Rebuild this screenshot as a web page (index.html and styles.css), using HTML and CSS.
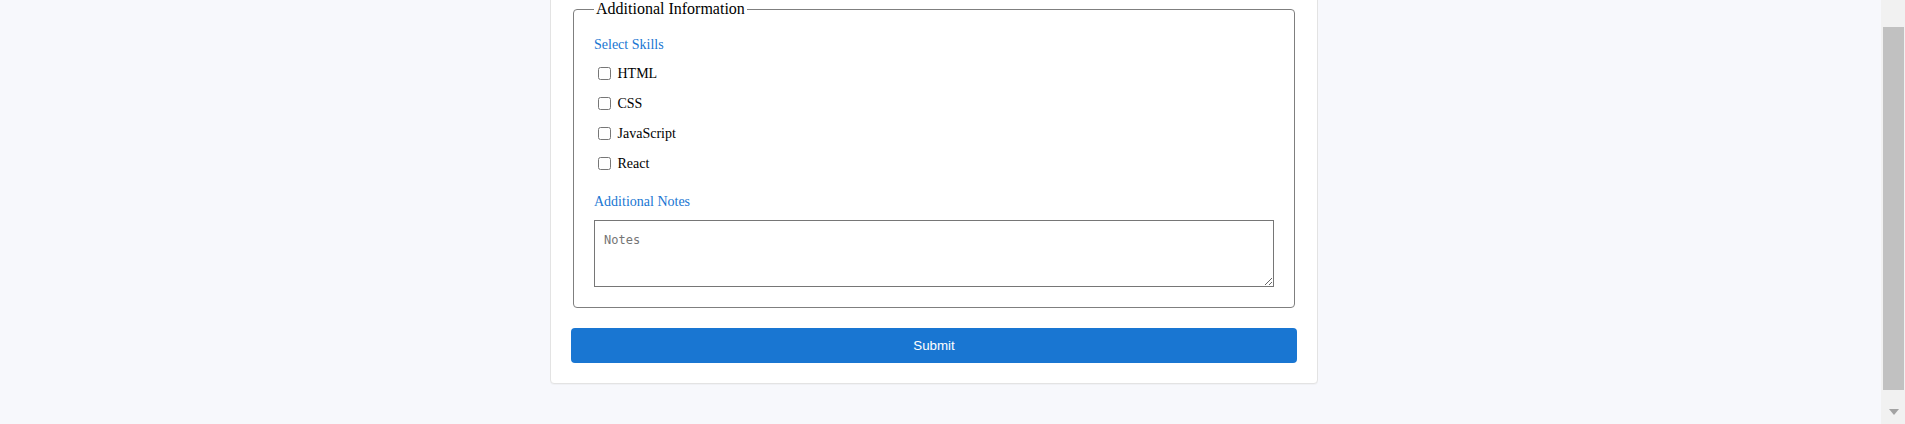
FILE: index.html
```html
<!DOCTYPE html>
<html lang="en">
<head>
<meta charset="utf-8">
<title>Form</title>
<link rel="stylesheet" href="styles.css">
</head>
<body>
<div class="viewport">
  <main class="page">
    <form class="card">
      <fieldset class="section">
        <legend class="section-title">Additional Information</legend>
        <span class="field-label">Select Skills</span>
        <div class="checkbox-list">
          <label class="checkbox-row"><input type="checkbox" class="checkbox"> HTML</label>
          <label class="checkbox-row"><input type="checkbox" class="checkbox"> CSS</label>
          <label class="checkbox-row"><input type="checkbox" class="checkbox"> JavaScript</label>
          <label class="checkbox-row"><input type="checkbox" class="checkbox"> React</label>
        </div>
        <label class="field-label notes-label" for="notes">Additional Notes</label>
        <textarea id="notes" class="notes" placeholder="Notes"></textarea>
      </fieldset>
      <button type="submit" class="submit">Submit</button>
    </form>
  </main>
</div>
<div class="scrollbar" aria-hidden="true">
  <div class="scrollbar-thumb"></div>
  <div class="scrollbar-button">
    <svg width="10" height="6" viewBox="0 0 10 6"><path d="M0 0h10L5 6z" fill="#a3a3a3"/></svg>
  </div>
</div>
</body>
</html>
```

FILE: styles.css
```css
html {
  background: #f7f8fc;
}

body {
  margin: 0;
  height: 100vh;
  display: flex;
  overflow: hidden;
  font-family: "Liberation Serif", "Times New Roman", serif;
  color: #000;
}

.viewport {
  flex: 1;
  min-width: 0;
  height: 100vh;
  overflow: hidden;
  display: flex;
  flex-direction: column;
  justify-content: flex-end;
}

.scrollbar {
  width: 24px;
  flex: none;
  background: #f1f1f1;
  display: flex;
  flex-direction: column;
  padding-top: 27px;
  box-sizing: border-box;
}

.scrollbar-thumb {
  flex: 1;
  margin: 0 1px 0 2px;
  background: #c1c1c1;
}

.scrollbar-button {
  height: 34px;
  display: flex;
  justify-content: center;
  align-items: flex-start;
  padding-top: 19px;
  box-sizing: border-box;
}

.scrollbar-button svg {
  display: block;
  margin-left: 1px;
}

.page {
  flex: none;
  display: flex;
  justify-content: center;
  padding: 0 13px 40px 0;
}

.card {
  box-sizing: border-box;
  width: 768px;
  background: #fff;
  border: 1px solid #e3e3e3;
  border-radius: 4px;
  box-shadow: 0 1px 1px rgba(0, 0, 0, 0.03);
  padding: 20px;
  display: flex;
  flex-direction: column;
  gap: 20px;
}

.section {
  margin: 0 2px;
  border: 1px solid #7f7f7f;
  border-radius: 4px;
  padding: 19px 20px 20px;
  display: flex;
  flex-direction: column;
}

.section-title {
  font-size: 16px;
  padding: 0 2px;
}

.field-label {
  display: block;
  font-size: 14px;
  line-height: 16px;
  color: #1976d2;
}

.checkbox-list {
  display: flex;
  flex-direction: column;
  gap: 11px;
  margin: 11px 0 21px;
}

.checkbox-row {
  display: flex;
  align-items: center;
  height: 19px;
  font-size: 14px;
  white-space: pre;
}

.checkbox {
  width: 13px;
  height: 13px;
  margin: 3px 3px 3px 4px;
}

.notes-label {
  margin-bottom: 10px;
}

.notes {
  display: block;
  box-sizing: border-box;
  width: 100%;
  height: 67px;
  margin: 0;
  padding: 11px 9px 8px;
  border: 1px solid #767676;
  font-family: "DejaVu Sans Mono", "Liberation Mono", monospace;
  font-size: 12px;
  line-height: 16px;
}

.notes::placeholder {
  color: #757575;
}

.submit {
  height: 35px;
  border: none;
  border-radius: 4px;
  background: #1976d2;
  color: #fff;
  font-family: "Liberation Sans", Arial, sans-serif;
  font-size: 13.33px;
  cursor: pointer;
}
```
